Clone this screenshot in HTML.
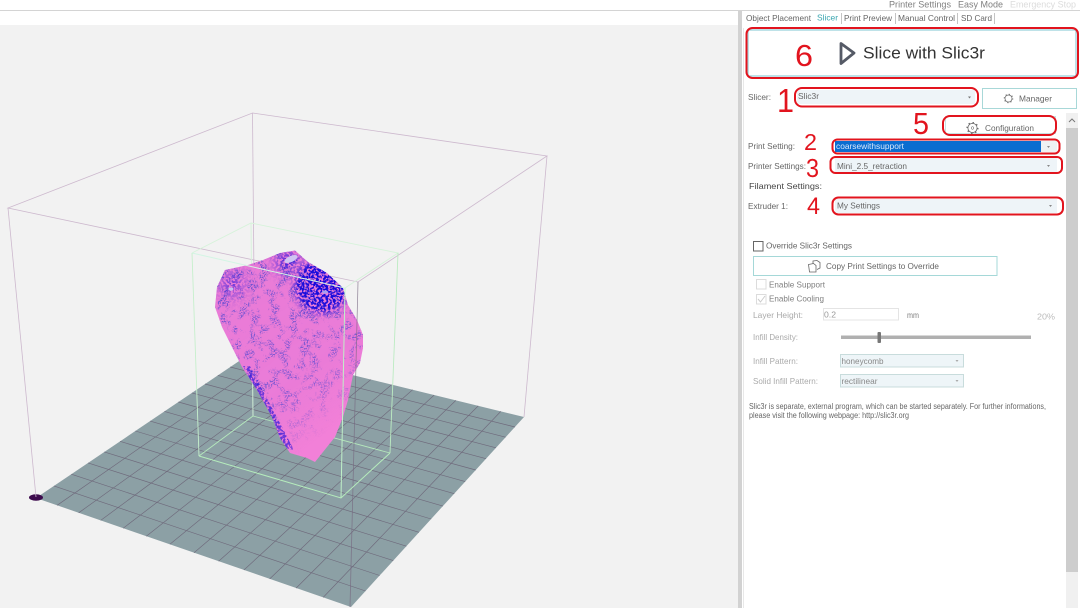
<!DOCTYPE html>
<html><head><meta charset="utf-8"><title>Slicer</title>
<style>html,body{margin:0;padding:0;background:#fff;overflow:hidden}svg{display:block;filter:blur(.35px)}text{font-family:"Liberation Sans",sans-serif;font-size:8.5px;fill:#666}</style></head>
<body>
<svg width="1080" height="608" viewBox="0 0 1080 608" xmlns="http://www.w3.org/2000/svg">
<defs>
<clipPath id="mc"><path d="M295 250.5L308 262L327 273L343 288L348 305L357 320L363 335L363 348L360 363L353 375L348 400L343 417L335 437L323 452L315 462L307 458L290 453L280 438L272 417L257 390L242 367L230 343L222 327L215 307L217 287L225 270L248 265L263 260L280 253Z"/></clipPath>
<filter id="f1" x="200" y="240" width="180" height="230" filterUnits="userSpaceOnUse" color-interpolation-filters="sRGB">
<feTurbulence type="fractalNoise" baseFrequency=".7" numOctaves="2" seed="5" result="a"/>
<feColorMatrix in="a" values="0 0 0 0 .45 0 0 0 0 .33 0 0 0 0 .82 7 0 0 0 -3.3" result="fine"/>
<feTurbulence type="fractalNoise" baseFrequency=".1" numOctaves="3" seed="9" result="b"/>
<feColorMatrix in="b" values="0 0 0 0 0 0 0 0 0 0 0 0 0 0 0 0 7 0 0 -3.4" result="blot"/>
<feComposite in="fine" in2="blot" operator="in"/>
</filter>
<filter id="f2" x="200" y="240" width="180" height="230" filterUnits="userSpaceOnUse" color-interpolation-filters="sRGB">
<feTurbulence type="fractalNoise" baseFrequency=".42" numOctaves="2" seed="12"/>
<feColorMatrix values="0 0 0 0 .07 0 0 0 0 .03 0 0 0 0 .86 10 0 0 0 -4.3"/>
</filter>
<linearGradient id="g1" gradientUnits="userSpaceOnUse" x1="235" y1="290" x2="345" y2="430"><stop offset="0" stop-color="#fff"/><stop offset=".65" stop-color="#ddd"/><stop offset=".95" stop-color="#000"/></linearGradient>
<mask id="m1" maskUnits="userSpaceOnUse" x="200" y="240" width="180" height="230"><rect x="200" y="240" width="180" height="230" fill="url(#g1)"/></mask>
<radialGradient id="g2" gradientUnits="userSpaceOnUse" cx="322" cy="286" r="36"><stop offset="0" stop-color="#fff"/><stop offset=".65" stop-color="#eee"/><stop offset="1" stop-color="#000" stop-opacity="0"/></radialGradient>
<radialGradient id="g4" gradientUnits="userSpaceOnUse" cx="288" cy="262" r="28"><stop offset="0" stop-color="#ddd"/><stop offset="1" stop-color="#000" stop-opacity="0"/></radialGradient>
<radialGradient id="g3" gradientUnits="userSpaceOnUse" cx="232" cy="284" r="30"><stop offset="0" stop-color="#999"/><stop offset="1" stop-color="#000" stop-opacity="0"/></radialGradient>
<mask id="m2" maskUnits="userSpaceOnUse" x="200" y="240" width="180" height="230"><rect x="200" y="240" width="180" height="230" fill="#000"/><circle cx="232" cy="284" r="30" fill="url(#g3)"/><circle cx="288" cy="262" r="28" fill="url(#g4)"/><circle cx="322" cy="286" r="36" fill="url(#g2)"/><path d="M243 366L250 366L294 450L285 448Z" fill="#999"/></mask>
</defs>

<rect width="1080" height="608" fill="#fff"/>
<rect x="0" y="10" width="1080" height="1" fill="#d4d4d4"/>
<rect x="0" y="25" width="739" height="583" fill="#f2f2f2"/>
<rect x="738" y="11" width="4" height="597" fill="#d2d2d2"/>
<rect x="743" y="28" width="1" height="580" fill="#e8e8e8"/>

<!-- bed -->
<polygon points="36,498 351,607 524,417 254,351" fill="#8ca0a5"/>
<g stroke="#6f6a7c" stroke-width=".65" fill="none">
<path d="M57.1 505.3L272.6 355.6M78.7 512.8L291.6 360.2M100.7 520.4L310.9 364.9M123.2 528.2L330.5 369.7M146.3 536.2L350.5 374.6M169.9 544.3L370.8 379.6M194 552.7L391.5 384.7M218.6 561.2L412.6 389.8M243.9 570L434.1 395.1M269.7 578.9L455.9 400.4M296.1 588.1L478.2 405.9M323.2 597.4L500.8 411.4"/>
<path d="M53.9 485.9L365.6 591M71.3 474.2L379.7 575.5M88.1 462.9L393.3 560.6M104.3 451.9L406.4 546.2M120 441.3L419 532.3M135.3 431L431.2 519M150.1 421.1L442.9 506.1M164.4 411.4L454.3 493.7M178.4 402L465.2 481.6M191.9 392.9L475.8 470M205 384L486.1 458.7M217.8 375.4L496 447.8M230.2 367L505.6 437.2M242.2 358.9L515 427"/>
</g>
<ellipse cx="36" cy="497.5" rx="7" ry="3.2" fill="#3c0a4c"/>

<!-- purple build volume, back -->
<g stroke="#cdb9ce" stroke-width=".8" fill="none">
<path d="M252.5 113L547 156L358 282L8 208Z"/>
<path d="M252.5 113L254 280"/>
<path d="M8 208L36 497"/>
<path d="M547 156L524 417"/>
</g>
<!-- green box, back -->
<g stroke="#d6f3da" stroke-width=".9" fill="none">
<path d="M192 253L251 223L398 253L345 288"/>
<path d="M251 223L253 416"/>
<path d="M253 416L199 456M253 416L390 453" stroke="#b5e8bc"/>
</g>

<!-- mesh -->
<g clip-path="url(#mc)">
<rect x="200" y="240" width="180" height="230" fill="#f280d8"/>
<rect x="200" y="240" width="180" height="230" fill="#c96ad6" opacity=".2" mask="url(#m1)"/>
<rect x="200" y="240" width="180" height="230" filter="url(#f1)" mask="url(#m1)"/>
<rect x="200" y="240" width="180" height="230" filter="url(#f2)" mask="url(#m2)"/>
<ellipse cx="291" cy="259" rx="7" ry="3" fill="#cfc4f2" transform="rotate(-25 291 259)"/>
<ellipse cx="231" cy="289" rx="2.5" ry="1.6" fill="#c8c0f0"/>
<ellipse cx="325" cy="292" rx="3" ry="1.6" fill="#a8a0f0"/>
</g>

<!-- front lines -->
<g fill="none">
<path d="M358 282L350 607" stroke="#75657f" stroke-width=".8" opacity=".7"/>
<path d="M192 253L345 288" stroke="#d3f5e4" stroke-width="1"/>
<path d="M192 253L199 456" stroke="#c6efcc" stroke-width=".9"/>
<path d="M398 253L390 453" stroke="#bcebc2" stroke-width=".9"/>
<path d="M345 288L341 498" stroke="#c0f0c8"/>
<path d="M199 456L341 498L390 453" stroke="#b5ecbc"/>
</g>

<!-- top bar -->
<text x="889" y="7.5" textLength="62" lengthAdjust="spacingAndGlyphs" style="font-size:9.5px;fill:#808080">Printer Settings</text>
<text x="958" y="7.5" textLength="45" lengthAdjust="spacingAndGlyphs" style="font-size:9.5px;fill:#808080">Easy Mode</text>
<text x="1010" y="7.5" textLength="66" lengthAdjust="spacingAndGlyphs" style="font-size:9.5px;fill:#dcdcdc">Emergency Stop</text>

<!-- tabs -->
<text x="746" y="21" textLength="65" lengthAdjust="spacingAndGlyphs">Object Placement</text>
<text x="817" y="20.5" textLength="21" lengthAdjust="spacingAndGlyphs" style="fill:#3aa6b0">Slicer</text>
<text x="844" y="21" textLength="48" lengthAdjust="spacingAndGlyphs">Print Preview</text>
<text x="898" y="21" textLength="57" lengthAdjust="spacingAndGlyphs">Manual Control</text>
<text x="961" y="21" textLength="31" lengthAdjust="spacingAndGlyphs">SD Card</text>
<g fill="#c4c4c4"><rect x="841" y="13" width="1" height="11"/><rect x="895" y="13" width="1" height="11"/><rect x="957" y="13" width="1" height="11"/><rect x="994" y="13" width="1" height="11"/></g>

<!-- Slice button -->
<rect x="748" y="30" width="328" height="46" fill="#fff" stroke="#a8d8e0" stroke-width="1.5"/>
<path d="M841 43.5L854 53L841 63.5Z" fill="none" stroke="#555a66" stroke-width="2.8" stroke-linejoin="round"/>
<text x="863" y="58.5" textLength="122" lengthAdjust="spacingAndGlyphs" style="font-size:17px;fill:#333">Slice with Slic3r</text>

<!-- Slicer row -->
<text x="748" y="100" textLength="23" lengthAdjust="spacingAndGlyphs">Slicer:</text>
<rect x="797" y="90" width="178" height="14" fill="#eef4f8"/>
<text x="798" y="99" textLength="21" lengthAdjust="spacingAndGlyphs">Slic3r</text>
<path d="M968 96.5L971 96.5L969.5 98.5Z" fill="#777"/>
<rect x="982.5" y="88.5" width="94" height="20" fill="#fff" stroke="#a8d8d8"/>
<g fill="none" stroke="#666"><circle cx="1008.5" cy="98.5" r="3.5" stroke-width=".7"/><circle cx="1008.5" cy="98.5" r="4.3" stroke-width=".9" stroke-dasharray="1.2 2.2"/></g>
<text x="1019" y="101.5" textLength="33" lengthAdjust="spacingAndGlyphs">Manager</text>

<!-- Configuration -->
<rect x="945.5" y="116.5" width="110" height="17" fill="#fff" stroke="#c4e4e4"/>
<g fill="none" stroke="#555"><circle cx="972.5" cy="128" r="4.6" stroke-width=".7"/><circle cx="972.5" cy="128" r="5.5" stroke-width="1" stroke-dasharray="1.4 2.9"/><circle cx="972.5" cy="128" r="1.3" stroke-width=".5"/></g>
<text x="985" y="131" textLength="49" lengthAdjust="spacingAndGlyphs">Configuration</text>

<!-- Print setting -->
<text x="748" y="149" textLength="47" lengthAdjust="spacingAndGlyphs">Print Setting:</text>
<rect x="835" y="141" width="222" height="11" fill="#eef2f4"/>
<rect x="835" y="141" width="206" height="11" fill="#0a6dd0"/>
<text x="836" y="149" textLength="68" lengthAdjust="spacingAndGlyphs" style="fill:#d8e8fb">coarsewithsupport</text>
<path d="M1047 146L1050 146L1048.5 148Z" fill="#888"/>

<!-- Printer settings -->
<text x="748" y="169" textLength="58" lengthAdjust="spacingAndGlyphs">Printer Settings:</text>
<rect x="835" y="158" width="222" height="14" fill="#eef4f8"/>
<text x="837" y="169" textLength="70" lengthAdjust="spacingAndGlyphs">Mini_2.5_retraction</text>
<path d="M1047 165L1050 165L1048.5 167Z" fill="#888"/>

<text x="749" y="189" textLength="73" lengthAdjust="spacingAndGlyphs" style="fill:#444">Filament Settings:</text>

<!-- Extruder -->
<text x="748" y="209" textLength="40" lengthAdjust="spacingAndGlyphs">Extruder 1:</text>
<rect x="835" y="199" width="222" height="14" fill="#eef4f8"/>
<text x="837" y="208.5" textLength="43" lengthAdjust="spacingAndGlyphs">My Settings</text>
<path d="M1049 205L1052 205L1050.5 207Z" fill="#888"/>

<!-- scrollbar -->
<rect x="1066" y="113" width="12" height="15" fill="#f0f0f0"/>
<path d="M1069 122L1072 119L1075 122" fill="none" stroke="#777"/>
<rect x="1066" y="128" width="12" height="444" fill="#cdcdcd"/>
<rect x="1066" y="572" width="12" height="36" fill="#f0f0f0"/>

<!-- override -->
<rect x="753.5" y="241.5" width="9.5" height="9.5" fill="#fff" stroke="#666"/>
<text x="766" y="248.5" textLength="86" lengthAdjust="spacingAndGlyphs">Override Slic3r Settings</text>
<rect x="753.5" y="256.5" width="243.5" height="19" fill="#fff" stroke="#a5d8d8"/>
<g fill="#fff" stroke="#666" stroke-width=".8"><path d="M813 263.5L813 261L817 260.5L820 262.5L820 268L817 269.5"/><path d="M808.5 264.5L813.5 263.5L816 265.5L816 272L809.5 272Z"/></g>
<text x="826" y="269" textLength="113" lengthAdjust="spacingAndGlyphs">Copy Print Settings to Override</text>

<rect x="756.5" y="279.5" width="9.5" height="9.5" fill="#fff" stroke="#dcdcdc"/>
<text x="769" y="287.5" textLength="56" lengthAdjust="spacingAndGlyphs" style="fill:#808080">Enable Support</text>
<rect x="756.5" y="294.5" width="9.5" height="9.5" fill="#fff" stroke="#dcdcdc"/>
<path d="M758 299L760.5 302L765 296" fill="none" stroke="#ccc"/>
<text x="769" y="301.5" textLength="55" lengthAdjust="spacingAndGlyphs" style="fill:#808080">Enable Cooling</text>

<text x="753" y="318" textLength="50" lengthAdjust="spacingAndGlyphs" style="fill:#aaa">Layer Height:</text>
<rect x="823.5" y="308.5" width="75" height="11.5" fill="#fff" stroke="#e4e4e4"/>
<text x="824" y="317.5" textLength="12" lengthAdjust="spacingAndGlyphs" style="fill:#999">0.2</text>
<text x="907" y="318" textLength="12" lengthAdjust="spacingAndGlyphs" style="fill:#808080">mm</text>
<text x="1037" y="319.5" textLength="18" lengthAdjust="spacingAndGlyphs" style="fill:#bbb">20%</text>

<text x="753" y="340" textLength="45" lengthAdjust="spacingAndGlyphs" style="fill:#aaa">Infill Density:</text>
<rect x="841" y="335.5" width="190" height="3.5" fill="#b0b0b0"/>
<rect x="877.5" y="332" width="3.5" height="11" rx="1" fill="#777"/>

<text x="753" y="364" textLength="45" lengthAdjust="spacingAndGlyphs" style="fill:#aaa">Infill Pattern:</text>
<rect x="840.5" y="354.5" width="123" height="12.5" fill="#eef5f8" stroke="#c8dcdc"/>
<text x="841.5" y="364" textLength="42" lengthAdjust="spacingAndGlyphs" style="fill:#888">honeycomb</text>
<path d="M955.5 360L958.5 360L957 362Z" fill="#aaa"/>

<text x="753" y="384" textLength="65" lengthAdjust="spacingAndGlyphs" style="fill:#aaa">Solid Infill Pattern:</text>
<rect x="840.5" y="374.5" width="123" height="12.5" fill="#eef5f8" stroke="#c8dcdc"/>
<text x="841.5" y="384" textLength="36" lengthAdjust="spacingAndGlyphs" style="fill:#888">rectilinear</text>
<path d="M955.5 380L958.5 380L957 382Z" fill="#aaa"/>

<text x="749" y="409" textLength="297" lengthAdjust="spacingAndGlyphs" style="font-size:8px;fill:#666">Slic3r is separate, external program, which can be started separately. For further informations,</text>
<text x="749" y="418" textLength="160" lengthAdjust="spacingAndGlyphs" style="font-size:8px;fill:#666">please visit the following webpage: http://slic3r.org</text>

<!-- red annotations -->
<g fill="none" stroke="#e2141e" stroke-width="2">
<rect x="746.5" y="28" width="331.5" height="50" rx="6"/>
<rect x="795" y="88" width="183" height="18.5" rx="7"/>
<rect x="943" y="116" width="113" height="19" rx="7"/>
<rect x="832.5" y="139.5" width="227" height="14" rx="5"/>
<rect x="830.5" y="157" width="231.5" height="16" rx="5"/>
<rect x="832.5" y="197.5" width="230.5" height="17" rx="6"/>
</g>
<text x="795" y="66" textLength="18" lengthAdjust="spacingAndGlyphs" style="font-size:31px;fill:#e2141e">6</text>
<text x="777" y="112" textLength="17" lengthAdjust="spacingAndGlyphs" style="font-size:33px;fill:#e2141e">1</text>
<text x="913" y="134" textLength="16" lengthAdjust="spacingAndGlyphs" style="font-size:31px;fill:#e2141e">5</text>
<text x="804" y="150" textLength="13" lengthAdjust="spacingAndGlyphs" style="font-size:23px;fill:#e2141e">2</text>
<text x="806" y="177" textLength="13" lengthAdjust="spacingAndGlyphs" style="font-size:26px;fill:#e2141e">3</text>
<text x="807" y="214" textLength="13" lengthAdjust="spacingAndGlyphs" style="font-size:24px;fill:#e2141e">4</text>
</svg>
</body></html>
